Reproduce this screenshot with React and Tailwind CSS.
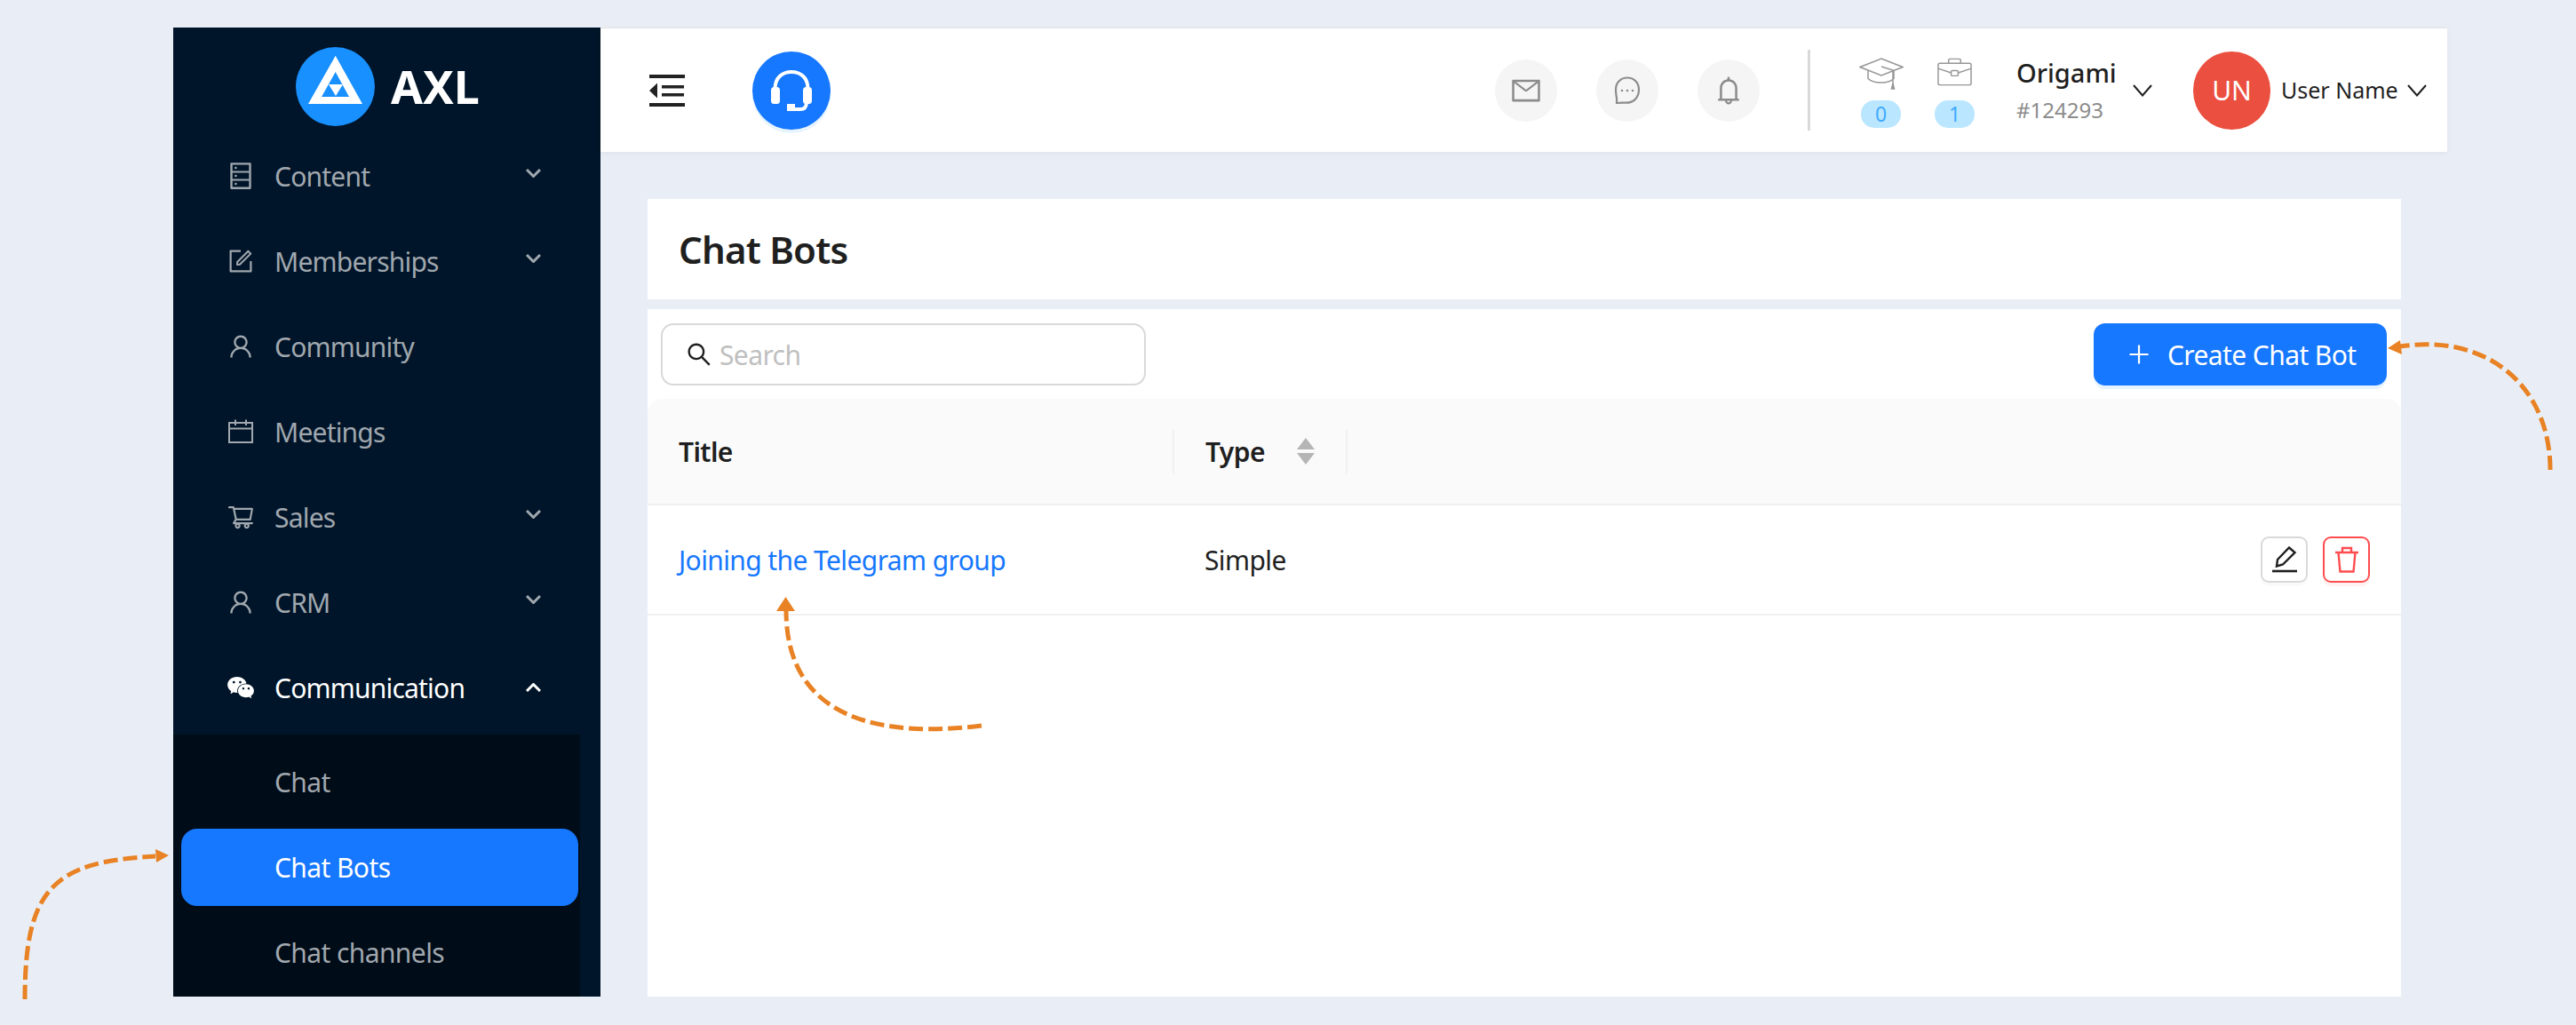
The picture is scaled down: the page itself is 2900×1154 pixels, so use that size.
import {
  AiOutlineBell,
  AiOutlineDatabase,
  AiOutlineForm,
  AiOutlineMail,
  AiOutlinePlus,
  AiOutlineSearch,
  AiOutlineShoppingCart,
  AiOutlineUser,
  AiFillWechat,
} from 'react-icons/ai';

const font = "font-['Noto_Sans','Open_Sans',sans-serif]";

function Chevron({ up, width = 17, height = 10, weight = 3, className = '' }) {
  return (
    <svg className={className} width={width} height={height} viewBox={`0 0 ${width} ${height}`} fill="none" stroke="currentColor" strokeWidth={weight}>
      <path d={up ? `M1 ${height - 1}L${width / 2} 1.500L${width - 1} ${height - 1}` : `M1 1L${width / 2} ${height - 1.5}L${width - 1} 1`} />
    </svg>
  );
}

function CalendarIcon() {
  return (
    <svg width="28" height="28" viewBox="0 0 28 28" fill="none" stroke="currentColor" strokeWidth="2">
      <rect x="1" y="4" width="26" height="22" />
      <path d="M1 10.5h26M8 0.5v6.5M20 0.5v6.5" />
    </svg>
  );
}

function LogoMark() {
  return (
    <svg width="89" height="89" viewBox="0 0 89 89">
      <circle cx="44.5" cy="44.5" r="44.5" fill="#1890ff" />
      <path d="M44.7 9.7 75 64H14Z M44.7 28 29 56h31Z" fill="#fff" fillRule="evenodd" />
      <path d="M37 42h16l-8 13Z" fill="#fff" />
    </svg>
  );
}

function NavRow({ icon, label, open, active }) {
  return (
    <div className={`flex items-center h-[96px] pl-[58px] text-[30px] tracking-[-0.8px] ${active ? 'text-white' : 'text-[#a0a7ae]'}`}>
      <span className="flex items-center justify-center w-[36px] mr-[20px]">{icon}</span>
      <span>{label}</span>
      {open === false && <Chevron className="ml-auto mr-[67px] mb-[6px]" />}
      {open === true && <Chevron up className="ml-auto mr-[67px] text-white" />}
    </div>
  );
}

function SubRow({ label, active }) {
  return (
    <div
      className={`flex items-center h-[87px] shrink-0 pl-[105px] ml-[9px] mr-[2px] rounded-[18px] text-[30px] tracking-[-0.6px] ${
        active ? 'bg-[#1677ff] text-white' : 'text-[#a0a7ae]'
      }`}
    >
      {label}
    </div>
  );
}

function Sidebar() {
  return (
    <aside className="w-[481px] h-[1091px] shrink-0 bg-[#001529] overflow-hidden">
      <div className="flex items-start h-[119px] pl-[138px] pt-[22px]">
        <LogoMark />
        <span className="ml-[18px] mt-[15px] text-[52px] leading-[58px] font-bold text-white">AXL</span>
      </div>
      <NavRow icon={<AiOutlineDatabase size={34} />} label="Content" open={false} />
      <NavRow icon={<AiOutlineForm size={32} />} label="Memberships" open={false} />
      <NavRow icon={<AiOutlineUser size={32} />} label="Community" />
      <NavRow icon={<CalendarIcon />} label="Meetings" />
      <NavRow icon={<AiOutlineShoppingCart size={32} />} label="Sales" open={false} />
      <NavRow icon={<AiOutlineUser size={32} />} label="CRM" open={false} />
      <NavRow icon={<AiFillWechat size={34} />} label="Communication" open={true} active />
      <div className="flex flex-col gap-[9px] w-[458px] h-[295px] mt-[5px] pt-[10px] bg-[#000c17] overflow-hidden">
        <SubRow label="Chat" />
        <SubRow label="Chat Bots" active />
        <SubRow label="Chat channels" />
      </div>
    </aside>
  );
}

function MenuFold() {
  return (
    <svg width="40" height="36" viewBox="0 0 40 36" fill="#222">
      <path d="M0 0h40v4H0zM14 12h25v3.500H14zM14 21h25v3.500H14zM0 32h40v4H0zM0 18 9 9.500v17Z" />
    </svg>
  );
}

function Headset() {
  return (
    <svg width="46" height="46" viewBox="0 0 46 46" fill="none" stroke="#fff" strokeWidth="4">
      <path d="M4.500 21C4.500 9 12 2 23 2s18.500 7 18.500 19" />
      <rect x="1.500" y="20.500" width="7" height="16" rx="2" fill="#fff" strokeWidth="3" />
      <rect x="37.500" y="20.500" width="7" height="16" rx="2" fill="#fff" strokeWidth="3" />
      <path d="M40 36c0 5-2 8-7 8h-6" />
      <rect x="18" y="38" width="9" height="8" fill="#fff" stroke="none" />
    </svg>
  );
}

function RoundIcon({ children }) {
  return (
    <span className="flex items-center justify-center w-[70px] h-[70px] rounded-full bg-[#f5f5f5] text-[#8c8c8c]">
      {children}
    </span>
  );
}

function ChatBubble() {
  return (
    <svg width="30" height="32" viewBox="0 0 30 32" fill="none" stroke="#8c8c8c" strokeWidth="2.200">
      <path d="M15 1.500C7.500 1.500 2 7 2 15c0 4 .6 7 1 9.500.2 1.700 0 4 0 5.500 3.500-.5 7-.3 11-.3 8 0 14-6 14-14.700C28 7 22.500 1.500 15 1.500Z" />
      <circle cx="9" cy="16" r="1.300" fill="#8c8c8c" stroke="none" />
      <circle cx="15" cy="16" r="1.300" fill="#8c8c8c" stroke="none" />
      <circle cx="21" cy="16" r="1.300" fill="#8c8c8c" stroke="none" />
    </svg>
  );
}

function GradCap() {
  return (
    <svg width="50" height="36" viewBox="0 0 50 36" fill="none" stroke="#969696" strokeWidth="1.500">
      <path d="M25 1 49 10.500 25 20 1 10.500Z" />
      <path d="M10 14.500v9c3 3 9 4.500 15 4.500s11-1.500 14-4.500v-9M25 10l13 4v16" />
      <path d="M36.500 35l1.500-6 1.500 6Z" fill="#969696" />
    </svg>
  );
}

function Briefcase() {
  return (
    <svg width="39" height="32" viewBox="0 0 40 32" fill="none" stroke="#969696" strokeWidth="1.500">
      <rect x="1" y="6" width="38" height="25" rx="2" />
      <path d="M13 6V2.500C13 1.500 14 1 15 1h10c1 0 2 .5 2 1.500V6M1 12l15 5M39 12l-15 5" />
      <rect x="16" y="14.500" width="8" height="6" rx="1" />
    </svg>
  );
}

function CountBadge({ value }) {
  return (
    <span className="flex items-center justify-center w-[45px] h-[31px] rounded-[15px] bg-[#bae7ff] text-[#40a9ff] text-[23px] leading-none">
      {value}
    </span>
  );
}

function Header() {
  return (
    <header className="flex items-center h-[140px] pl-[55px] bg-white border-t border-[#e4e4e4] shadow-[0_2px_8px_rgba(0,0,0,0.04)]">
      <MenuFold />
      <span className="flex items-center justify-center w-[88px] h-[88px] ml-[76px] rounded-full bg-[#1677ff] shadow-[0_4px_0_rgba(5,145,255,0.1)]">
        <Headset />
      </span>
      <div className="flex items-center gap-[44px] ml-auto">
        <RoundIcon><AiOutlineMail size={36} /></RoundIcon>
        <RoundIcon><ChatBubble /></RoundIcon>
        <RoundIcon><AiOutlineBell size={36} /></RoundIcon>
      </div>
      <span className="w-[3px] h-[91px] ml-[54px] bg-[#d9d9d9]" />
      <div className="flex gap-[38px] ml-[57px] mt-[6px]">
        <div className="flex flex-col items-center">
          <span className="flex justify-center w-[45px] h-[48px]"><span className="shrink-0"><GradCap /></span></span>
          <CountBadge value="0" />
        </div>
        <div className="flex flex-col items-center">
          <span className="flex justify-center w-[45px] h-[48px]"><Briefcase /></span>
          <CountBadge value="1" />
        </div>
      </div>
      <div className="flex flex-col w-[131px] ml-[47px]">
        <span className="text-[29px] leading-[38px] font-medium text-[#1f1f1f]">Origami</span>
        <span className="mt-[7px] text-[24px] leading-[32px] text-[#8c8c8c]">#124293</span>
      </div>
      <Chevron width={22} height={14} weight={2} className="text-[#1f1f1f]" />
      <span className="flex items-center justify-center w-[87px] h-[88px] ml-[46px] rounded-full bg-[#eb4f3f] text-white text-[30px]">
        UN
      </span>
      <span className="w-[142px] ml-[12px] text-[25px] text-[#1f1f1f]">User Name</span>
      <Chevron width={22} height={14} weight={2} className="text-[#1f1f1f]" />
      <span className="w-[23px]" />
    </header>
  );
}

function SortCarets() {
  return (
    <svg width="20" height="30" viewBox="0 0 20 30" fill="#b5b5b5">
      <path d="M10 0 20 13H0ZM10 30 0 17h20Z" />
    </svg>
  );
}

function EditIcon() {
  return (
    <svg width="28" height="30" viewBox="0 0 28 30" fill="none" stroke="#1f1f1f" strokeWidth="2.400">
      <path d="M19 1.500 25.500 7 12 20.500l-7 2 1-7.500Z" />
      <path d="M0 28h28" strokeWidth="2.600" />
    </svg>
  );
}

function TrashIcon() {
  return (
    <svg width="28" height="30" viewBox="0 0 28 30" fill="none" stroke="#ff4d4f" strokeWidth="2.400">
      <path d="M1 7h26M9 7V2h10v5M4.500 7 6.500 28.500h15L23.500 7" />
    </svg>
  );
}

function ChatBotsTable() {
  return (
    <section className="flex-1 bg-white tracking-[-0.6px]">
      <div className="flex items-start justify-between h-[101px] pl-[15px] pr-[16px] pt-[16px]">
        <div className="flex items-center w-[546px] h-[70px] pl-[25px] rounded-[14px] border-[2px] border-[#d9d9d9]">
          <AiOutlineSearch size={32} className="text-[#1f1f1f]" />
          <span className="ml-[7px] text-[30px] text-[#bfbfbf]">Search</span>
        </div>
        <button className="flex items-center w-[330px] h-[70px] pl-[36px] rounded-[13px] bg-[#1677ff] text-white text-[30px] shadow-[0_4px_0_rgba(5,145,255,0.1)]">
          <AiOutlinePlus size={30} />
          <span className="ml-[17px]">Create Chat Bot</span>
        </button>
      </div>
      <div className="flex items-center h-[120px] rounded-t-[16px] bg-[#fafafa] border-b-[2px] border-[#f0f0f0] text-[30px] font-semibold text-[#1f1f1f]">
        <div className="w-[591px] pl-[35px]">Title</div>
        <div className="flex items-center w-[197px] h-[49px] pl-[35px] pr-[35px] border-x-[2px] border-[#f0f0f0] justify-between">
          <span>Type</span>
          <SortCarets />
        </div>
      </div>
      <div className="flex items-center h-[124px] border-b-[2px] border-[#f0f0f0] text-[30px]">
        <div className="w-[591px] pl-[35px] text-[#1677ff]">Joining the Telegram group</div>
        <div className="pl-[36px] text-[#1f1f1f]">Simple</div>
        <div className="flex gap-[17px] ml-auto mr-[35px]">
          <span className="flex items-center justify-center w-[53px] h-[52px] rounded-[9px] border-[2px] border-[#d9d9d9] shadow-[0_4px_0_rgba(0,0,0,0.02)]">
            <EditIcon />
          </span>
          <span className="flex items-center justify-center w-[53px] h-[52px] rounded-[9px] border-[2px] border-[#ff4d4f] shadow-[0_4px_0_rgba(255,38,5,0.06)]">
            <TrashIcon />
          </span>
        </div>
      </div>
    </section>
  );
}

// Hand-drawn orange annotation arrows lying over the screenshot
function CurvedArrow({ className, width, height, d, head }) {
  return (
    <svg className={`absolute ${className}`} width={width} height={height} viewBox={`0 0 ${width} ${height}`} fill="none">
      <path d={d} stroke="#e88224" strokeWidth="5" strokeDasharray="16 6" strokeLinecap="butt" />
      <path d={head} fill="#e88224" />
    </svg>
  );
}

export default function App() {
  return (
    <div className={`relative flex w-[2900px] h-[1154px] pl-[195px] pt-[31px] bg-[#e9eef6] overflow-hidden ${font}`}>
      <Sidebar />
      <div className="flex flex-col w-[2079px] h-[1091px]">
        <Header />
        <main className="flex flex-col flex-1 gap-[11px] pt-[53px] pl-[53px] pr-[52px]">
          <div className="flex items-center h-[113px] pl-[35px] bg-white text-[42px] font-semibold tracking-[-0.8px] text-[#1f1f1f]">
            Chat Bots
          </div>
          <ChatBotsTable />
        </main>
      </div>
      <CurvedArrow
        className="left-[20px] top-[950px]"
        width={175}
        height={180}
        d="M8 175C8 50 40 20 155 14"
        head="M170 13 155 6 156 21Z"
      />
      <CurvedArrow
        className="left-[2680px] top-[375px]"
        width={200}
        height={160}
        d="M191 154C191 60 120 0 22 15"
        head="M8 17 22 8 24 24Z"
      />
      <CurvedArrow
        className="left-[870px] top-[665px]"
        width={240}
        height={160}
        d="M235 152C130 165 15 150 15 22"
        head="M14.500 7 25 23H4Z"
      />
    </div>
  );
}
